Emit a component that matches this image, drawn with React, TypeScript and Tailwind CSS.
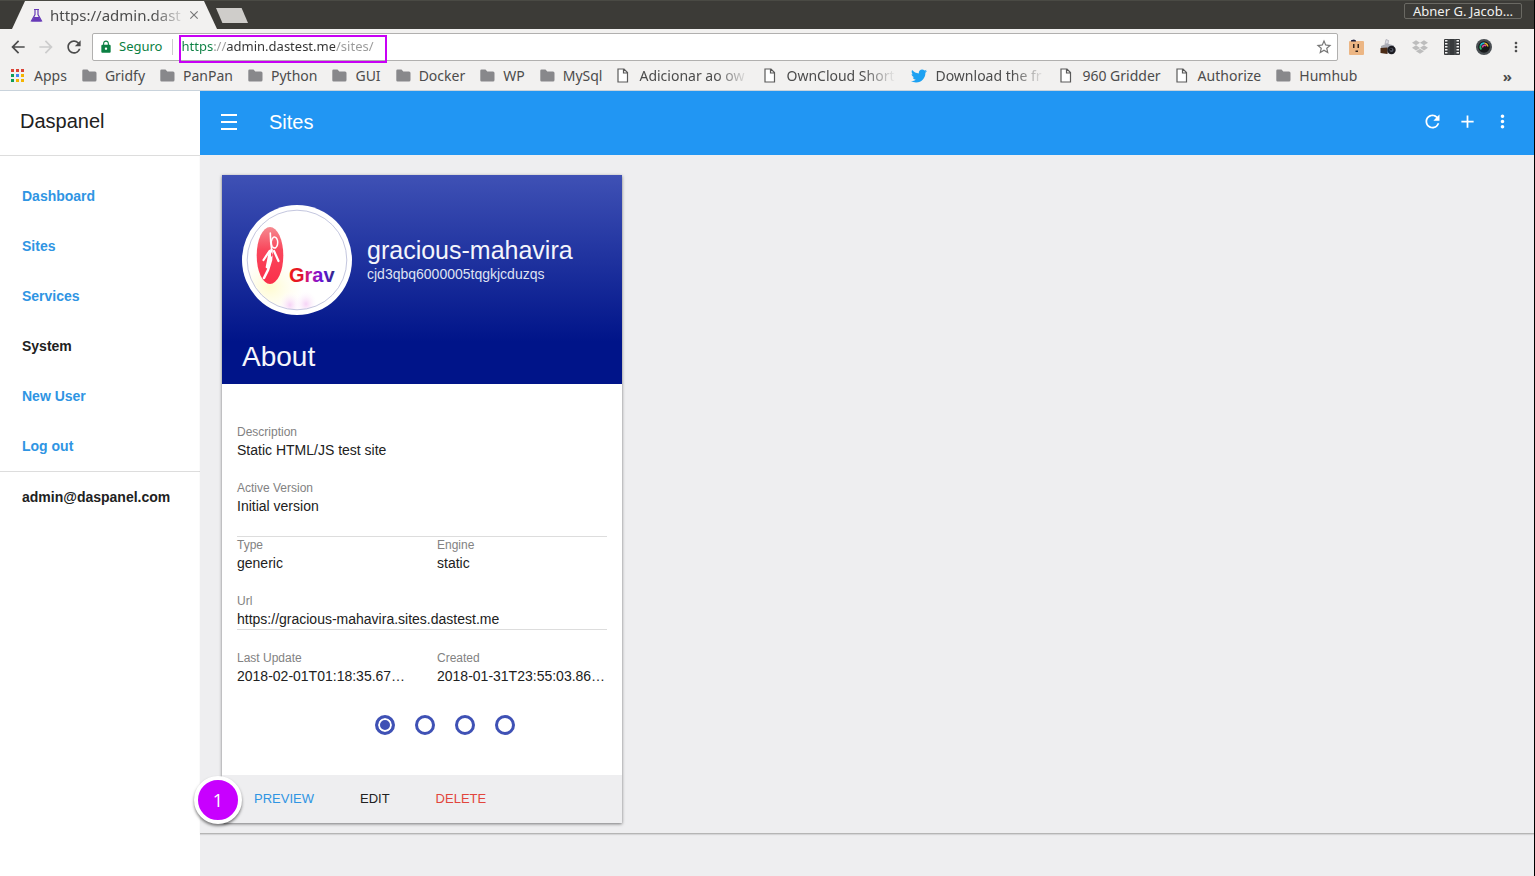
import { useState } from "react";
import type { ReactNode } from "react";
import { MdAdd, MdArrowBack, MdArrowForward, MdClose, MdLock, MdMoreVert, MdRefresh, MdStarBorder } from "react-icons/md";
import { FaDropbox, FaTwitter } from "react-icons/fa";

function FlaskIcon() {
  return (
    <svg viewBox="0 0 13 13" className="size-[13px] shrink-0" aria-hidden="true">
      <path d="M4 .5h5M5 1v4.5L1.500 12h10L8 5.500V1" fill="none" stroke="#673ab7" strokeWidth="1.200" />
      <path d="M4 8h5l2.500 4.500h-10z" fill="#673ab7" />
    </svg>
  );
}

function AppsIcon() {
  const colors = ["#db4437", "#db4437", "#db4437", "#0f9d58", "#4285f4", "#f4b400", "#0f9d58", "#f4b400", "#f4b400"];
  return (
    <svg viewBox="0 0 15 13" className="h-[13px] w-[15px] shrink-0" aria-hidden="true">
      {colors.map((c, i) => (
        <rect key={i} x={(i % 3) * 5} y={Math.floor(i / 3) * 5} width="3" height="3" fill={c} />
      ))}
    </svg>
  );
}

function FolderIcon() {
  return (
    <svg viewBox="0 0 15 13" className="h-[13px] w-[15px] shrink-0" aria-hidden="true">
      <path d="M1.500.5h4l1.800 2h5.700A1.500 1.500 0 0 1 14.500 4v7A1.500 1.500 0 0 1 13 12.500H1.500A1.200 1.200 0 0 1 .3 11.300V1.700A1.200 1.200 0 0 1 1.500.5z" fill="#88888b" />
    </svg>
  );
}

function PageIcon() {
  return (
    <svg viewBox="0 0 14 15" className="h-[15px] w-3.5 shrink-0" aria-hidden="true">
      <path d="M1 1h6l3.500 3.500V14H1zM6.500 1.500V5h4" fill="#fff" stroke="#5a5a5a" strokeWidth="1.200" />
    </svg>
  );
}

type Bookmark = { label: string; kind: "apps" | "folder" | "page" | "twitter"; faded?: boolean };

const bookmarks: Bookmark[] = [
  { label: "Apps", kind: "apps" },
  { label: "Gridfy", kind: "folder" },
  { label: "PanPan", kind: "folder" },
  { label: "Python", kind: "folder" },
  { label: "GUI", kind: "folder" },
  { label: "Docker", kind: "folder" },
  { label: "WP", kind: "folder" },
  { label: "MySql", kind: "folder" },
  { label: "Adicionar ao ow", kind: "page", faded: true },
  { label: "OwnCloud Short", kind: "page", faded: true },
  { label: "Download the fr", kind: "twitter", faded: true },
  { label: "960 Gridder", kind: "page" },
  { label: "Authorize", kind: "page" },
  { label: "Humhub", kind: "folder" },
];

function BookmarkIcon({ kind }: { kind: Bookmark["kind"] }) {
  if (kind === "apps") return <AppsIcon />;
  if (kind === "folder") return <FolderIcon />;
  if (kind === "page") return <PageIcon />;
  return <FaTwitter className="size-4 shrink-0 text-[#1da1f2]" />;
}

function FaceIcon() {
  return (
    <svg viewBox="0 0 16 16" className="size-4" aria-hidden="true">
      <rect x="1" y="2" width="15" height="14" rx="1" fill="#ecb684" />
      <path d="M3 2.500V1.200L6 .5l2 1v1z" fill="#1c1f3d" />
      <path d="M5 5h1.500v4H5zM9.500 5H11v4H9.500zM7.500 11.500h2.500v1.500H7.500z" fill="#34251d" />
    </svg>
  );
}

function CameraIcon() {
  return (
    <svg viewBox="0 0 16 16" className="size-4" aria-hidden="true">
      <path d="M5 5l1-4.500 2.500 1L8 5z" fill="#dcdce4" stroke="#8d8d99" strokeWidth=".5" />
      <path d="M1 7l6-2.500 7 2v8L1 14z" fill="#a9abb4" />
      <path d="M.5 9l7-.5V15L.5 14z" fill="#4b2b16" />
      <circle cx="11.500" cy="11" r="4.200" fill="#1c1c22" />
      <circle cx="11.500" cy="11" r="2" fill="#565a68" />
      <circle cx="11" cy="10.500" r="1" fill="#0e0e12" />
    </svg>
  );
}

function FilmIcon() {
  return (
    <svg viewBox="0 0 16 16" className="size-4" aria-hidden="true">
      <rect width="16" height="16" rx="1" fill="#37393b" />
      <path d="M5 0v16M11 0v16" stroke="#6a6c6e" strokeWidth=".6" />
      {[1, 4, 7, 10, 13].map((y) => (
        <path key={y} d={`M1 ${y}h2.500v1.600H1zM12.500 ${y}h2.500v1.600h-2.500z`} fill="#f1f1f1" />
      ))}
    </svg>
  );
}

function LensIcon() {
  return (
    <svg viewBox="0 0 16 16" className="size-4" aria-hidden="true">
      <circle cx="8" cy="8" r="8" fill="#4a4f53" />
      <circle cx="8" cy="8" r="5.800" fill="#17191b" />
      <path d="M5.300 10.500a3.800 3.800 0 0 1-.8-4" stroke="#28b66c" strokeWidth="1.800" fill="none" />
      <path d="M4.500 6.500a3.800 3.800 0 0 1 4-2.300" stroke="#24b6d0" strokeWidth="1.800" fill="none" />
      <path d="M8.500 4.200a3.800 3.800 0 0 1 3.300 3.300" stroke="#e9b82c" strokeWidth="1.500" fill="none" />
      <path d="M6.500 8.500a2 2 0 0 1 3.500-1.500" stroke="#e0479b" strokeWidth="1.500" fill="none" />
    </svg>
  );
}

function BrowserChrome() {
  return (
    <header className="bg-[#f2f1f0] font-['Noto_Sans',sans-serif] text-[#4c4c4c]">
      <div className="flex h-[29px] items-start justify-between border-t border-[#4a4a44] bg-[#3c3b37]">
        <div className="flex pl-3">
          <div className="flex h-7 w-[205px] items-center bg-[#f2f1f0] pl-[18px] pr-4 [clip-path:polygon(13px_0,calc(100%-13px)_0,100%_100%,0_100%)]">
            <FlaskIcon />
            <span className="ml-[7px] flex-1 text-[15px] leading-5 whitespace-nowrap [mask-image:linear-gradient(to_right,#000_75%,transparent)]">
              https://admin.dast
            </span>
            <button type="button" aria-label="Close tab" className="text-[#777]">
              <MdClose className="size-3.5" />
            </button>
          </div>
          <button
            type="button"
            aria-label="New tab"
            className="mt-[7px] -ml-px h-[15px] w-8 bg-[#cfcdca] [clip-path:polygon(0_0,80%_0,100%_100%,20%_100%)]"
          />
        </div>
        <button type="button" className="mt-0.5 mr-3 h-4 rounded-xs border border-[#6a6963] px-2 text-[13px] leading-3.5 text-[#f2f1f0]">
          Abner G. Jacob…
        </button>
      </div>

      <div className="flex h-9 items-center">
        <div className="flex items-center gap-2 px-2">
          <button type="button" aria-label="Back"><MdArrowBack className="size-5" /></button>
          <button type="button" aria-label="Forward" className="text-[#ccc]"><MdArrowForward className="size-5" /></button>
          <button type="button" aria-label="Reload"><MdRefresh className="size-5" /></button>
        </div>
        <div className="relative flex h-7 flex-1 items-center rounded-xs border border-[#b1b0af] bg-white pr-1 pl-1.5 text-[13px]">
          <MdLock className="size-3.5 shrink-0 text-[#0b8043]" />
          <label htmlFor="address" className="ml-1.5 text-[#0b8043]">Seguro</label>
          <span className="ml-2.5 h-4 w-px bg-[#ccc]" />
          <input
            id="address"
            type="text"
            defaultValue="https://admin.dastest.me/sites/"
            className="ml-2 min-w-0 flex-1 bg-[linear-gradient(to_right,#0b8043_32px,#999_32px,#999_45px,#333_45px,#333_154px,#999_154px)] bg-clip-text text-transparent caret-black outline-none"
          />
          <MdStarBorder className="size-[18px] shrink-0 text-[#777]" />
          <div className="pointer-events-none absolute top-px left-[86px] h-7 w-[208px] border-2 border-[#c800f5]" />
        </div>
        <div className="flex items-center gap-4 pr-2.5 pl-2.5">
          <button type="button" aria-label="Face extension"><FaceIcon /></button>
          <button type="button" aria-label="Camera extension"><CameraIcon /></button>
          <button type="button" aria-label="Dropbox"><FaDropbox className="size-4 text-[#bdbdbd]" /></button>
          <button type="button" aria-label="Video extension"><FilmIcon /></button>
          <button type="button" aria-label="Screenshot extension"><LensIcon /></button>
          <button type="button" aria-label="Browser menu"><MdMoreVert className="size-4" /></button>
        </div>
      </div>

      <nav aria-label="Bookmarks" className="flex h-[26px] items-center border-b border-[#c9d3dc] pr-[22px] pb-1 pl-[11px]">
        <div className="flex min-w-0 flex-1 gap-[15px]">
          {bookmarks.map((b) => (
            <a key={b.label} href="#" className="flex items-center gap-2 text-[14px] leading-5 whitespace-nowrap">
              <BookmarkIcon kind={b.kind} />
              <span className={b.faded ? "min-w-[110px] [mask-image:linear-gradient(to_right,#000_70%,transparent)]" : ""}>
                {b.label}
              </span>
            </a>
          ))}
        </div>
        <button type="button" aria-label="More bookmarks" className="text-[15px] leading-5 font-bold">»</button>
      </nav>
    </header>
  );
}

const menu = [
  { label: "Dashboard", link: true },
  { label: "Sites", link: true },
  { label: "Services", link: true },
  { label: "System", link: false },
  { label: "New User", link: true },
  { label: "Log out", link: true },
];

function Sidebar() {
  return (
    <aside className="w-[200px] shrink-0 bg-white">
      <h1 className="flex h-[65px] items-center border-b border-[#ddd] px-5 pb-1 text-[20px]">Daspanel</h1>
      <nav className="border-b border-[#ddd] pt-[15px] text-[14px] font-bold">
        {menu.map((m) => (
          <a
            key={m.label}
            href="#"
            className={m.link ? "flex h-[50px] items-center px-[22px] text-[#2f95e3]" : "flex h-[50px] items-center px-[22px]"}
          >
            {m.label}
          </a>
        ))}
      </nav>
      <p className="flex h-[50px] items-center px-[22px] text-[14px] font-bold">admin@daspanel.com</p>
    </aside>
  );
}

function Avatar() {
  return (
    <svg viewBox="0 0 110 110" className="size-[110px] shrink-0" role="img" aria-label="Grav">
      <defs>
        <linearGradient id="word" x1="0" x2="1" y1="0" y2="0">
          <stop offset="0" stopColor="#f01a1a" />
          <stop offset=".28" stopColor="#e0142c" />
          <stop offset=".45" stopColor="#c416a0" />
          <stop offset=".7" stopColor="#6a10d8" />
          <stop offset="1" stopColor="#2c2a80" />
        </linearGradient>
        <linearGradient id="disc" x1="0" x2="0" y1="0" y2="1">
          <stop offset="0" stopColor="#f58a90" />
          <stop offset=".4" stopColor="#f9475c" />
          <stop offset="1" stopColor="#fb2f4a" />
        </linearGradient>
        <radialGradient id="glowYellow">
          <stop offset="0" stopColor="#fffbd0" />
          <stop offset="1" stopColor="#fffde8" stopOpacity="0" />
        </radialGradient>
        <radialGradient id="glowPink">
          <stop offset="0" stopColor="#f6d3f6" />
          <stop offset="1" stopColor="#fff" stopOpacity="0" />
        </radialGradient>
        <clipPath id="inner"><circle cx="55" cy="55" r="49.500" /></clipPath>
      </defs>
      <circle cx="55" cy="55" r="55" fill="#fff" />
      <g clipPath="url(#inner)">
        <ellipse cx="28" cy="82" rx="34" ry="30" fill="url(#glowYellow)" />
        <ellipse cx="48" cy="100" rx="12" ry="14" fill="url(#glowPink)" />
        <ellipse cx="64" cy="99" rx="12" ry="14" fill="url(#glowPink)" />
      </g>
      <circle cx="55" cy="55" r="49.800" fill="none" stroke="#9a9fc8" strokeWidth=".6" />
      <ellipse cx="28" cy="50.500" rx="13.300" ry="28.500" fill="url(#disc)" />
      <g fill="none" stroke="#fff" strokeLinecap="round" strokeLinejoin="round">
        <path d="M28.300 28l.4 9 1 8" strokeWidth="1.600" />
        <ellipse cx="32.500" cy="37.500" rx="3.200" ry="5.500" strokeWidth="1.500" strokeDasharray="4 1" />
        <path d="M27.500 46l-6 9M32 46l4.500 10" strokeWidth="2.200" />
        <path d="M29.500 45l-.5 10-3 10-4 8M28 47l-3 15" strokeWidth="2.600" />
      </g>
      <path d="M29 47l2 3-2 2z" fill="#fb4058" />
      <text x="47" y="77" fill="url(#word)" className="font-['Liberation_Sans',sans-serif] text-[20px] font-bold">
        Grav
      </text>
    </svg>
  );
}

function Field({ label, children }: { label: string; children: ReactNode }) {
  return (
    <div className="min-w-0 flex-1">
      <dt className="text-[12px] leading-4 text-[#828282]">{label}</dt>
      <dd className="truncate text-[14px] leading-5">{children}</dd>
    </div>
  );
}

const slides = ["About", "Versions", "Domains", "Settings"];

function SiteCard() {
  const [slide, setSlide] = useState(0);
  return (
    <article className="w-[400px] bg-white shadow-[0_1px_3px_rgba(0,0,0,0.5)]">
      <header className="bg-[linear-gradient(to_bottom,#3f51b5,#001489_80%)] px-5 pt-[30px] pb-[11px] text-[#f4f5fb]">
        <div className="flex items-center gap-[15px]">
          <Avatar />
          <div>
            <h2 className="text-[25px] leading-7">gracious-mahavira</h2>
            <p className="text-[14px] leading-5 text-[#dfe2f2]">cjd3qbq6000005tqgkjcduzqs</p>
          </div>
        </div>
        <h3 className="mt-[26px] text-[28px] leading-8">About</h3>
      </header>

      <div className="px-[15px] py-10">
        <dl>
          <div className="flex"><Field label="Description">Static HTML/JS test site</Field></div>
          <div className="flex border-b border-[#ddd] py-5"><Field label="Active Version">Initial version</Field></div>
          <div className="flex gap-[30px]">
            <Field label="Type">generic</Field>
            <Field label="Engine">static</Field>
          </div>
          <div className="flex border-b border-[#ddd] pt-5"><Field label="Url">https://gracious-mahavira.sites.dastest.me</Field></div>
          <div className="flex gap-[30px] pt-5">
            <Field label="Last Update">2018-02-01T01:18:35.67…</Field>
            <Field label="Created">2018-01-31T23:55:03.86…</Field>
          </div>
        </dl>
        <div className="mt-[29px] flex justify-center gap-5 pl-[46px]">
          {slides.map((s, i) => (
            <input
              key={s}
              type="radio"
              name="slide"
              aria-label={s}
              checked={slide === i}
              onChange={() => setSlide(i)}
              className="size-5 appearance-none rounded-full border-3 border-[#3f51b5] bg-white checked:bg-[#3f51b5] checked:shadow-[inset_0_0_0_2px_#fff]"
            />
          ))}
        </div>
      </div>

      <footer className="relative flex h-12 items-center gap-[46px] bg-[#eeeef0] px-8 text-[13px]">
        <button type="button" className="text-[#2f95e3]">PREVIEW</button>
        <button type="button">EDIT</button>
        <button type="button" className="text-[#e2453c]">DELETE</button>
        <span className="absolute top-px -left-7 flex size-12 items-center justify-center rounded-full border-4 border-white bg-[#c800ff] font-['Open_Sans',sans-serif] text-[18px] text-white shadow-[0_2px_3px_rgba(0,0,0,0.5)]">
          1
        </span>
      </footer>
    </article>
  );
}

export default function App() {
  return (
    <div className="flex min-h-screen flex-col border-r border-black bg-[#eeeef0] font-['Liberation_Sans',Arial,sans-serif] text-[#212121]">
      <BrowserChrome />
      <div className="flex flex-1">
        <Sidebar />
        <div className="min-w-0 flex-1">
          <header className="flex h-16 items-center bg-[#2196f3] px-[21px] pb-0.5 text-white">
            <button type="button" aria-label="Toggle menu">
              <svg viewBox="0 0 16 16" className="size-4" aria-hidden="true">
                <path d="M0 1h16M0 8h16M0 15h16" stroke="#fff" strokeWidth="2" />
              </svg>
            </button>
            <h2 className="ml-8 flex-1 text-[20px]">Sites</h2>
            <div className="flex gap-3.5 pb-0.5">
              <button type="button" aria-label="Refresh"><MdRefresh className="size-[21px]" /></button>
              <button type="button" aria-label="Add site"><MdAdd className="size-[21px]" /></button>
              <button type="button" aria-label="More"><MdMoreVert className="size-[21px]" /></button>
            </div>
          </header>
          <main className="border-b border-[#b5b5b5] px-[22px] pt-5 pb-2.5 shadow-[0_1px_1px_rgba(0,0,0,0.1)]">
            <SiteCard />
          </main>
        </div>
      </div>
    </div>
  );
}
